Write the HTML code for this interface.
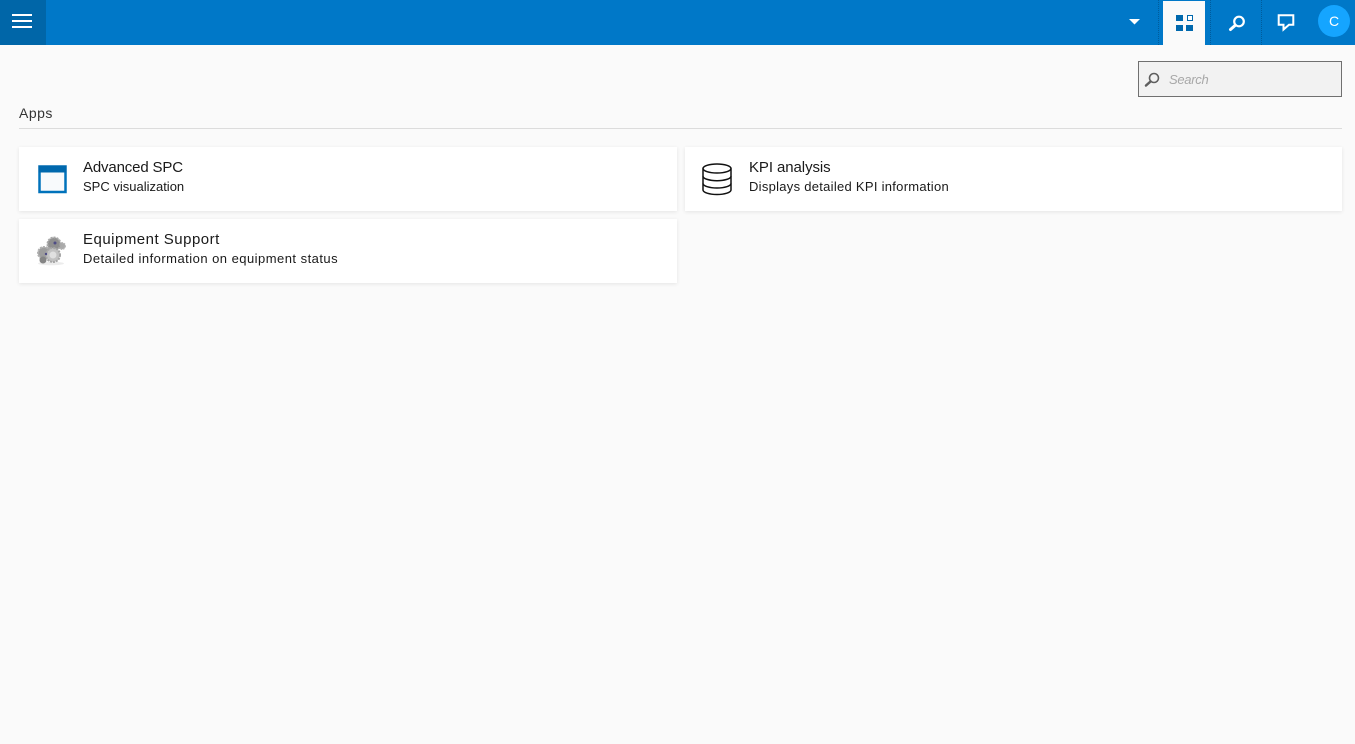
<!DOCTYPE html>
<html lang="en">
<head>
<meta charset="utf-8">
<title>Apps</title>
<style>
html,body{margin:0;padding:0;width:1355px;height:744px;overflow:hidden;background:#fafafa;font-family:"Liberation Sans",sans-serif;color:#1a1a1a}
.abs{position:absolute}
.bar{left:0;top:0;width:1355px;height:45px;background:#0078c8}
.menu{left:0;top:0;width:46px;height:45px;background:#0066a8}
.line{left:12px;width:20px;height:2px;background:#fff}
.sep{top:0;width:0;height:45px;border-left:1px dotted #005c9c}
.active{left:1163px;top:1px;width:42px;height:44px;background:#fafafa}
.sq{width:7px;height:6px;background:#0068ad}
.avatar{left:1318px;top:5px;width:32px;height:32px;border-radius:50%;background:#15a5ff;color:#fff;font-size:14px;line-height:33px;text-align:center}
.search{left:1138px;top:61px;width:202px;height:34px;border:1px solid #707070;background:#f2f2f2}
.ph{left:1169px;top:72px;font-size:13px;line-height:16px;font-style:italic;color:#a8a8a8;white-space:nowrap;letter-spacing:-.3px}
.apps{left:19px;top:105px;font-size:14px;line-height:16px;color:#333;white-space:nowrap;letter-spacing:.5px}
.rule{left:19px;top:128px;width:1323px;height:1px;background:#dcdcdc}
.card{background:#fff;box-shadow:0 1px 4px rgba(0,0,0,.09);height:64px}
.t{font-size:15px;line-height:18px;white-space:nowrap;color:#1a1a1a}
.s{font-size:13px;line-height:16px;white-space:nowrap;color:#1a1a1a}
</style>
</head>
<body>
<div class="abs bar"></div>
<div class="abs menu"></div>
<div class="abs line" style="top:14px"></div>
<div class="abs line" style="top:20px"></div>
<div class="abs line" style="top:26px"></div>

<svg class="abs" style="left:1128px;top:18px" width="13" height="8" viewBox="0 0 13 8"><path d="M1 1H12L6.500 6.500Z" fill="#fff"/></svg>
<div class="abs sep" style="left:1158px"></div>
<div class="abs sep" style="left:1210px"></div>
<div class="abs sep" style="left:1261px"></div>
<div class="abs active"></div>
<div class="abs sq" style="left:1176px;top:15px"></div>
<div class="abs" style="left:1187px;top:15px;width:4px;height:4px;border:1px solid #0068ad;background:#fff"></div>
<div class="abs sq" style="left:1176px;top:25px"></div>
<div class="abs sq" style="left:1186px;top:25px"></div>

<svg class="abs" style="left:1227px;top:14px" width="20" height="19" viewBox="0 0 20 19"><circle cx="12" cy="7.500" r="4.800" fill="none" stroke="#fff" stroke-width="2.200"/><path d="M8 11.500L3.500 15.500" stroke="#fff" stroke-width="3" stroke-linecap="round"/></svg>
<svg class="abs" style="left:1276px;top:13px" width="20" height="20" viewBox="0 0 20 20"><path d="M2.700 2.300H17.300V11.700H13L7.500 16.500V11.700H2.700Z" fill="none" stroke="#fff" stroke-width="2"/></svg>
<div class="abs avatar">C</div>

<div class="abs search"></div>
<svg class="abs" style="left:1143px;top:71px" width="18" height="18" viewBox="0 0 18 18"><circle cx="11" cy="7" r="4.500" fill="none" stroke="#5f5f5f" stroke-width="1.600"/><path d="M7.500 10.500L3 14.500" stroke="#5f5f5f" stroke-width="2.500" stroke-linecap="round"/></svg>
<div class="abs ph">Search</div>

<div class="abs apps">Apps</div>
<div class="abs rule"></div>

<div class="abs card" style="left:19px;top:147px;width:658px"></div>
<div class="abs card" style="left:685px;top:147px;width:657px"></div>
<div class="abs card" style="left:19px;top:219px;width:658px"></div>

<svg class="abs" style="left:38px;top:165px" width="30" height="29" viewBox="0 0 30 29"><rect x="1.500" y="1.500" width="26" height="25.500" fill="#f8fafc" stroke="#0072bb" stroke-width="2.500"/><rect x="0.500" y="0.500" width="28" height="7" fill="#0068ad"/></svg>
<div class="abs t" style="left:83px;top:159px;letter-spacing:-.15px">Advanced SPC</div>
<div class="abs s" style="left:83px;top:179px">SPC visualization</div>

<svg class="abs" style="left:701px;top:162px" width="32" height="34" viewBox="0 0 32 34" fill="none" stroke="#111" stroke-width="1.500"><ellipse cx="16" cy="6.500" rx="14" ry="4.500"/><path d="M2 6.500V28C2 30.500 8.500 32.500 16 32.500S30 30.500 30 28V6.500"/><path d="M2 14.200C2 16.700 8.500 18.700 16 18.700S30 16.700 30 14.200"/><path d="M2 21.500C2 24 8.500 26 16 26S30 24 30 21.500"/></svg>
<div class="abs t" style="left:749px;top:159px;letter-spacing:-.08px">KPI analysis</div>
<div class="abs s" style="left:749px;top:179px;letter-spacing:.28px">Displays detailed KPI information</div>

<svg class="abs" style="left:35px;top:235px" width="32" height="32" viewBox="0 0 32 32"><ellipse cx="16" cy="28.500" rx="13" ry="1.800" fill="#ececec"/><circle cx="27" cy="11" r="3.300" fill="#aaa" stroke="#b5b5b5" stroke-width="1.400" stroke-dasharray="1.500 1"/><circle cx="19" cy="9" r="6.500" fill="#8f8f8f" stroke="#a8a8a8" stroke-width="2" stroke-dasharray="2 1"/><circle cx="9" cy="18" r="6" fill="#9d9d9d" stroke="#b0b0b0" stroke-width="2" stroke-dasharray="2 1"/><circle cx="18" cy="20" r="7" fill="#c2c2c2" stroke="#a6a6a6" stroke-width="2" stroke-dasharray="2 1"/><circle cx="18" cy="20" r="3.500" fill="#e0e0e0"/><circle cx="8" cy="25" r="3.500" fill="#858585"/><circle cx="20" cy="8" r="1.500" fill="#4f4c86"/><circle cx="11" cy="19" r="1.200" fill="#4f4c86"/></svg>
<div class="abs t" style="left:83px;top:231px;letter-spacing:.49px">Equipment Support</div>
<div class="abs s" style="left:83px;top:251px;letter-spacing:.47px">Detailed information on equipment status</div>
</body>
</html>
